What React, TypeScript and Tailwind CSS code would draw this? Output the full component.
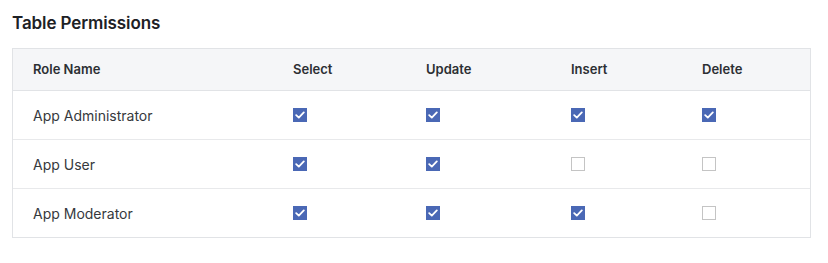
const COLUMNS = ["Select", "Update", "Insert", "Delete"];

const ROLES = [
  { name: "App Administrator", perms: [true, true, true, true] },
  { name: "App User", perms: [true, true, false, false] },
  { name: "App Moderator", perms: [true, true, true, false] },
];

const GRID = "grid grid-cols-[260px_133px_145px_131px_1fr] items-center";

function Checkbox({ checked }: { checked: boolean }) {
  if (!checked) {
    return <span className="block h-[14px] w-[14px] border border-[#c4c4c4] bg-white" />;
  }
  return (
    <span className="flex h-[14px] w-[14px] items-center justify-center bg-[#4a68b5]">
      <svg width="10" height="8" viewBox="0 0 10 8" fill="none">
        <path d="M1.2 4.2 L3.8 6.6 L8.8 1.4" stroke="white" strokeWidth="1.8" strokeLinecap="round" strokeLinejoin="round" />
      </svg>
    </span>
  );
}

export default function App() {
  return (
    <div className="h-[263px] w-[828px] bg-white px-3 pt-[11px] font-['Inter',sans-serif]">
      <h2 className="mb-[13px] text-[17px] font-semibold leading-6 tracking-[-0.1px] text-[#1d2125]">Table Permissions</h2>
      <div className="w-[799px] border border-[#e1e3e6]">
        <div className={`${GRID} h-[42px] border-b border-[#e1e3e6] bg-[#f5f6f8] text-[13px] font-semibold text-[#2c2f33]`}>
          <div className="pl-5">Role Name</div>
          {COLUMNS.map((c) => (
            <div key={c} className="pl-5">
              {c}
            </div>
          ))}
        </div>
        {ROLES.map((r, i) => (
          <div
            key={r.name}
            className={`${GRID} ${i < ROLES.length - 1 ? "h-[49px] border-b border-[#e8e9eb]" : "h-[48px]"} text-[14px] text-[#36393d]`}
          >
            <div className="pl-5">{r.name}</div>
            {r.perms.map((p, j) => (
              <div key={j} className="pl-5">
                <Checkbox checked={p} />
              </div>
            ))}
          </div>
        ))}
      </div>
    </div>
  );
}
